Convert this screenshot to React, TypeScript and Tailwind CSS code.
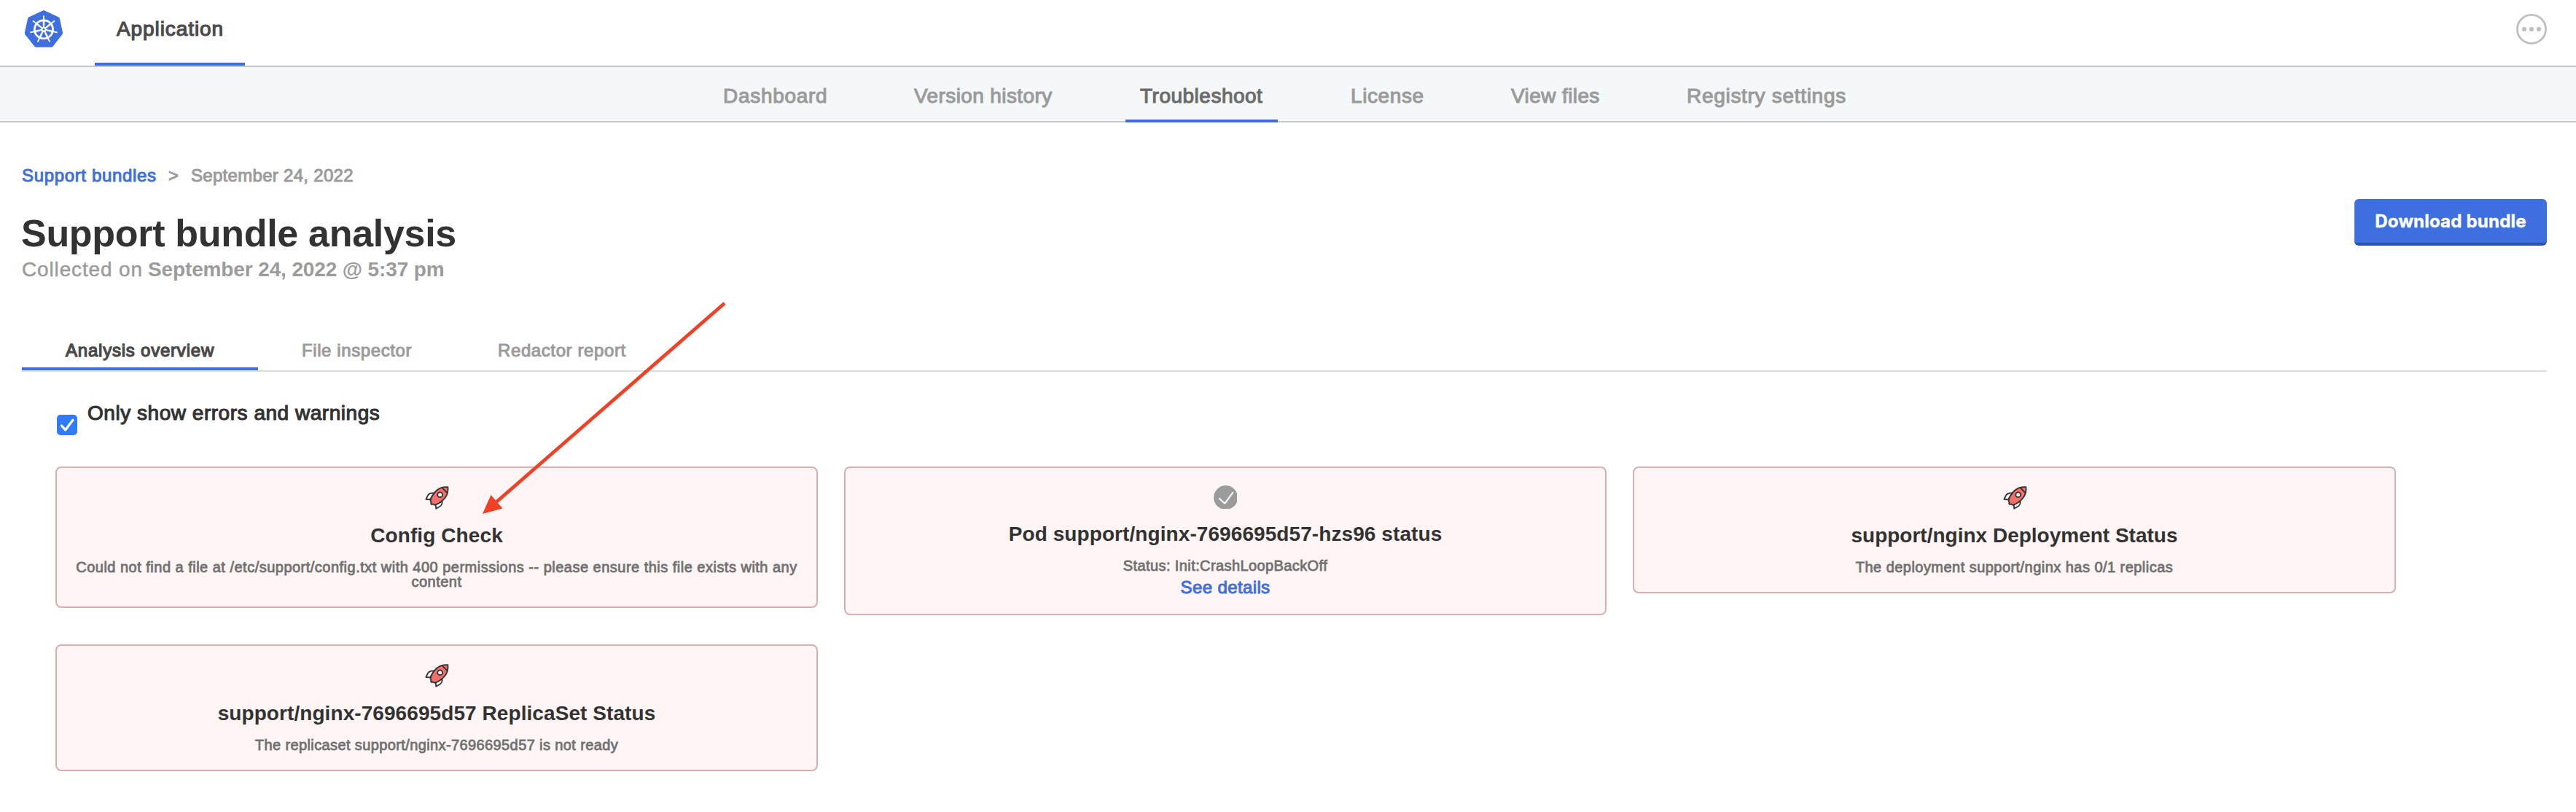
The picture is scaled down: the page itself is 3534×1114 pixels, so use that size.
import React from "react";

function KubernetesLogo() {
  const spokes = [0, 1, 2, 3, 4, 5, 6];
  return (
    <svg className="mt-[13px] ml-[33px] h-[54px] w-[54px] shrink-0" viewBox="33 13 54 54">
      <path
        d="M60 17 L79.2 26 L83.3 45.4 L70.4 62 L49.6 62 L36.6 45.4 L40.8 26 Z"
        fill="#3f6fde"
        stroke="#3f6fde"
        strokeWidth="5.6"
        strokeLinejoin="round"
      />
      <circle cx="60" cy="40.4" r="12.6" fill="none" stroke="#fff" strokeWidth="2.7" />
      {spokes.map((k) => (
        <g key={k} transform={`rotate(${(k * 360) / 7} 60 40.4)`}>
          <path d="M59.3 38 L58.8 28 L61.2 28 L60.7 38 Z" fill="#fff" stroke="#fff" strokeWidth="0.5" />
          <path d="M60 28 V22" stroke="#fff" strokeWidth="1.8" strokeLinecap="round" />
        </g>
      ))}
      <circle cx="60" cy="40.4" r="3.5" fill="#fff" />
      <circle cx="60" cy="40.4" r="1.4" fill="#3f6fde" />
    </svg>
  );
}

function Rocket() {
  return (
    <svg className="h-8 w-8 overflow-visible" viewBox="0 0 32 32">
      <g stroke="#323232" strokeWidth="1.8" strokeLinejoin="round">
        <path d="M12.5 9.5 C8.5 8.8 5.8 10 4.3 12.2 L1.4 18 L7 18.3 Z" fill="#fff" />
        <path d="M23.5 20.5 C24 24 22.8 26.2 20.5 27.8 L15.2 30.7 L14.8 25.5 Z" fill="#fff" />
        <path
          d="M31.4 1.1 C25.5 0.7 20 2 15.8 6 C11.4 10.3 8.2 16 7.5 20.2 L8.7 22.6 L8 23.8 L9.3 25.2 L10.9 24.5 L13 25.8 C17.8 24.6 23 21.2 27 16.6 C30.9 12 32.2 7 31.4 1.1 Z"
          fill="#f2706b"
        />
        <path d="M23.6 2.2 L30.7 9.4" fill="none" />
        <circle cx="20.7" cy="11.7" r="3.4" fill="#fff" />
      </g>
    </svg>
  );
}

function CheckCircle() {
  return (
    <svg className="h-8 w-8" viewBox="0 0 32 32">
      <circle cx="16.6" cy="16.6" r="16.5" fill="#9b9b9b" />
      <path
        d="M8 18 L14.3 24 Q15.2 24.8 16 23.8 L26.2 9.8"
        fill="none"
        stroke="#fff"
        strokeWidth="2"
        strokeLinecap="round"
        strokeLinejoin="round"
      />
    </svg>
  );
}

function NavItem({ label, className, active }: { label: string; className: string; active?: boolean }) {
  return (
    <a
      className={`h-[76px] shrink-0 pt-[25px] text-[28px] leading-[29px] whitespace-nowrap [-webkit-text-stroke:1.1px_currentColor] ${
        active ? "border-b-4 border-[#3f6fde] text-[#6b6b6b]" : "text-[#9b9b9b]"
      } ${className}`}
    >
      {label}
    </a>
  );
}

function Tab({ label, className, active }: { label: string; className: string; active?: boolean }) {
  return (
    <a
      className={`h-10 shrink-0 text-[24px] leading-[25px] whitespace-nowrap ${
        active ? "border-b-4 border-[#3f6fde] text-[#4a4a4a]" : "text-[#9b9b9b]"
      } ${className}`}
    >
      {label}
    </a>
  );
}

function Card({
  icon,
  title,
  message,
  className,
  titleClass,
  messageClass,
  link,
}: {
  icon: React.ReactNode;
  title: string;
  message: string;
  className: string;
  titleClass: string;
  messageClass: string;
  link?: string;
}) {
  return (
    <article
      className={`flex flex-col items-center rounded-[8px] border-2 border-[#d6b1b2] bg-[#fef5f4] px-5 text-center ${className}`}
    >
      {icon}
      <h2 className={`text-[28px] leading-[29px] font-bold whitespace-nowrap text-[#323232] ${titleClass}`}>{title}</h2>
      <p
        className={`mt-[19px] text-[20px] leading-5 text-[#717171] [-webkit-text-stroke:0.8px_currentColor] ${messageClass}`}
      >
        {message}
      </p>
      {link && (
        <a className="mt-[7px] text-[24px] leading-[25px] tracking-[0.385px] text-[#3f6fde] [-webkit-text-stroke:1px_currentColor]">
          {link}
        </a>
      )}
    </article>
  );
}

export default function App() {
  return (
    <div className="relative h-[1114px] w-[3534px] overflow-hidden bg-white font-['Liberation_Sans',Arial,sans-serif]">
      <header className="flex h-[92px] items-start border-b-2 border-[#c4c8ca]">
        <KubernetesLogo />
        <a className="ml-[43px] h-[90px] w-[206px] border-b-4 border-[#3f6fde] pl-[30px] text-[28px] leading-[79px] tracking-[0.92px] text-[#4a4a4a] [-webkit-text-stroke:1.2px_currentColor]">
          Application
        </a>
        <svg className="mt-[19px] mr-10 ml-auto h-[42px] w-[42px]" viewBox="0 0 42 42" fill="#bfbfbf">
          <circle cx="21" cy="21" r="19.6" fill="none" stroke="#bfbfbf" strokeWidth="2.8" />
          <circle cx="11" cy="21" r="3.1" />
          <circle cx="21" cy="21" r="3.1" />
          <circle cx="31" cy="21" r="3.1" />
        </svg>
      </header>

      <nav className="flex h-[76px] gap-20 border-b-2 border-[#c4c8ca] bg-[#f4f8f9] pl-[971px]">
        <NavItem label="Dashboard" className="w-[183px] pl-[21px] tracking-[0.7px]" />
        <NavItem label="Version history" className="w-[230px] pl-5 tracking-[0.4px]" />
        <NavItem label="Troubleshoot" className="w-[209px] pl-5 tracking-[0.5px]" active />
        <NavItem label="License" className="w-[140px] pl-5 tracking-[0.6px]" />
        <NavItem label="View files" className="w-[160px] pl-5 tracking-[0.4px]" />
        <NavItem label="Registry settings" className="w-[260px] pl-[21px] tracking-[0.7px]" />
      </nav>

      <main className="pt-[60px] pr-10 pl-[30px]">
        <div className="flex text-[24px] leading-[25px] whitespace-nowrap text-[#9b9b9b] [-webkit-text-stroke:1px_currentColor]">
          <a className="w-[201px] tracking-[0.66px] text-[#3f6fde]">Support bundles</a>
          <span className="w-[31px]">&gt;</span>
          <span className="tracking-[0.3px]">September 24, 2022</span>
        </div>

        <div className="mt-5 flex items-start justify-between">
          <div className="pt-[21px]">
            <h1 className="-ml-px text-[52px] leading-[52px] font-bold tracking-[-0.3px] whitespace-nowrap text-[#323232]">
              Support bundle analysis
            </h1>
            <p className="mt-[9px] flex text-[28px] leading-[29px] whitespace-nowrap text-[#9b9b9b]">
              <span className="w-[173px] tracking-[0.85px] [-webkit-text-stroke:0.5px_currentColor]">Collected on</span>
              <strong className="font-bold tracking-[-0.13px]">September 24, 2022 @ 5:37 pm</strong>
            </p>
          </div>
          <button className="h-16 w-[264px] rounded-[6px] border-b-4 border-[#2c53a6] bg-[#3f6fde] pb-px font-[Inter,sans-serif] text-[24px] leading-[61px] font-bold tracking-[0.22px] whitespace-nowrap text-white [-webkit-text-stroke:0.4px_currentColor]">
            Download bundle
          </button>
        </div>

        <div className="mt-[84px] flex border-b-2 border-[#dcdcdc]">
          <Tab
            label="Analysis overview"
            className="w-[324px] pl-[60px] tracking-[0.78px] [-webkit-text-stroke:1.3px_currentColor]"
            active
          />
          <Tab
            label="File inspector"
            className="w-[268px] pl-[60px] tracking-[0.6px] [-webkit-text-stroke:1px_currentColor]"
          />
          <Tab
            label="Redactor report"
            className="w-[300px] pl-[61px] tracking-[0.6px] [-webkit-text-stroke:1px_currentColor]"
          />
        </div>

        <label className="mt-[42px] ml-12 flex items-start gap-[14px]">
          <span className="mt-[17px] flex h-7 w-7 items-center justify-center rounded-[5px] bg-[#2f7cf6]">
            <svg className="h-7 w-7" viewBox="0 0 28 28">
              <path
                d="M6.5 15 L11.8 20.8 L22 7.2"
                fill="none"
                stroke="#fff"
                strokeWidth="3.2"
                strokeLinecap="round"
                strokeLinejoin="round"
              />
            </svg>
          </span>
          <span className="text-[28px] leading-[29px] tracking-[0.53px] whitespace-nowrap text-[#323232] [-webkit-text-stroke:1.1px_currentColor]">
            Only show errors and warnings
          </span>
        </label>

        <section className="mt-[43px] ml-[46px] grid grid-cols-[repeat(3,1046px)] items-start gap-x-9 gap-y-10">
          <Card
            icon={<Rocket />}
            title="Config Check"
            message="Could not find a file at /etc/support/config.txt with 400 permissions -- please ensure this file exists with any content"
            className="h-[194px] pt-[25px]"
            titleClass="mt-[21px] tracking-[0.1px]"
            messageClass="tracking-[0.487px]"
          />
          <Card
            icon={<CheckCircle />}
            title="Pod support/nginx-7696695d57-hzs96 status"
            message="Status: Init:CrashLoopBackOff"
            className="h-[204px] pt-6"
            titleClass="mt-5 tracking-[0.08px]"
            messageClass="tracking-[0.4px]"
            link="See details"
          />
          <Card
            icon={<Rocket />}
            title="support/nginx Deployment Status"
            message="The deployment support/nginx has 0/1 replicas"
            className="h-[174px] w-[1047px] pt-[25px]"
            titleClass="mt-[21px]"
            messageClass="tracking-[0.46px]"
          />
          <Card
            icon={<Rocket />}
            title="support/nginx-7696695d57 ReplicaSet Status"
            message="The replicaset support/nginx-7696695d57 is not ready"
            className="h-[174px] pt-[25px]"
            titleClass="mt-[21px] tracking-[0.074px]"
            messageClass="tracking-[0.39px]"
          />
        </section>
      </main>

      <svg className="pointer-events-none absolute top-[410px] left-[655px] h-[300px] w-[345px]" viewBox="655 410 345 300">
        <path d="M994 416 L676 693" stroke="#ee4126" strokeWidth="4.8" fill="none" />
        <path d="M662 705 L673.5 679 L689.5 697.5 Z" fill="#ee4126" />
      </svg>
    </div>
  );
}
